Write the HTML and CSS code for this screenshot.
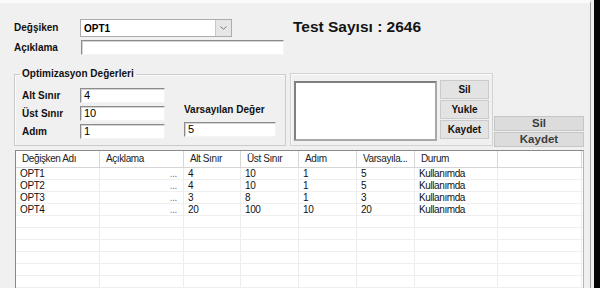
FILE: index.html
```html
<!DOCTYPE html>
<html lang="tr">
<head>
    <meta charset="UTF-8">
    <title>Optimizasyon</title>
    <link rel="stylesheet" href="styles.css">
</head>
<body>
<div class="window">
    <div class="top">
        <div class="fields">
            <div class="row">
                <span class="lbl">Değşiken</span>
                <div class="combo">
                    <span class="combo-text">OPT1</span>
                    <span class="drop">
                        <svg width="7" height="4" viewBox="0 0 7 4"><path d="M0.5 0.5 L3.5 3.2 L6.5 0.5" fill="none" stroke="#7a7a7a" stroke-width="1"/></svg>
                    </span>
                </div>
            </div>
            <div class="row">
                <span class="lbl">Açıklama</span>
                <div class="input desc"></div>
            </div>
        </div>
        <div class="title">Test Sayısı : 2646</div>
    </div>

    <div class="middle">
        <fieldset class="group">
            <legend>Optimizasyon Değerleri</legend>
            <div class="group-body">
                <div class="limits">
                    <div class="row"><span class="lbl short">Alt Sınır</span><div class="input num">4</div></div>
                    <div class="row"><span class="lbl short">Üst Sınır</span><div class="input num">10</div></div>
                    <div class="row"><span class="lbl short">Adım</span><div class="input num">1</div></div>
                </div>
                <div class="default">
                    <span class="lbl">Varsayılan Değer</span>
                    <div class="input def">5</div>
                </div>
            </div>
        </fieldset>

        <div class="panel">
            <div class="listbox"></div>
            <div class="btns">
                <button class="btn">Sil</button>
                <button class="btn">Yukle</button>
                <button class="btn">Kaydet</button>
            </div>
        </div>

        <div class="side-btns">
            <button class="flat">Sil</button>
            <button class="flat">Kaydet</button>
        </div>
    </div>

    <div class="grid">
        <div class="head">
            <div>Değişken Adı</div><div>Açıklama</div><div>Alt Sınır</div><div>Üst Sınır</div>
            <div>Adım</div><div>Varsayıla...</div><div>Durum</div><div></div>
        </div>
        <div class="line">
            <div>OPT1</div><div class="dots">...</div><div>4</div><div>10</div><div>1</div><div>5</div><div>Kullanımda</div><div></div>
        </div>
        <div class="line">
            <div>OPT2</div><div class="dots">...</div><div>4</div><div>10</div><div>1</div><div>5</div><div>Kullanımda</div><div></div>
        </div>
        <div class="line">
            <div>OPT3</div><div class="dots">...</div><div>3</div><div>8</div><div>1</div><div>3</div><div>Kullanımda</div><div></div>
        </div>
        <div class="line">
            <div>OPT4</div><div class="dots">...</div><div>20</div><div>100</div><div>10</div><div>20</div><div>Kullanımda</div><div></div>
        </div>
        <div class="line"><div></div><div></div><div></div><div></div><div></div><div></div><div></div><div></div></div>
        <div class="line"><div></div><div></div><div></div><div></div><div></div><div></div><div></div><div></div></div>
        <div class="line"><div></div><div></div><div></div><div></div><div></div><div></div><div></div><div></div></div>
        <div class="line"><div></div><div></div><div></div><div></div><div></div><div></div><div></div><div></div></div>
        <div class="line"><div></div><div></div><div></div><div></div><div></div><div></div><div></div><div></div></div>
        <div class="line"><div></div><div></div><div></div><div></div><div></div><div></div><div></div><div></div></div>
    </div>
</div>
</body>
</html>
```

FILE: styles.css
```css
body {
    margin: 0;
    width: 600px;
    height: 288px;
    overflow: hidden;
    background: #060606;
    font-family: "Liberation Sans", Arial, sans-serif;
    color: #000;
}
.window {
    width: 590px;
    height: 285px;
    background: #f0f0f0;
    border-top: 3px solid #fafafa;
    border-right: 1px solid #a3a3a3;
    box-shadow: 3px 0 0 #f0f0f0;
    overflow: hidden;
}
.top {
    display: flex;
    padding: 16px 0 0 14px;
}
.fields {
    display: flex;
    flex-direction: column;
    gap: 3px;
    width: 270px;
}
.row {
    display: flex;
    align-items: center;
}
.lbl {
    width: 66px;
    font-weight: bold;
    font-size: 10px;
    line-height: 12px;
    color: #111;
}
.lbl.short {
    width: 58px;
}
.combo {
    width: 152px;
    height: 18px;
    box-sizing: border-box;
    border: 1px solid #acacac;
    background: #fff;
    display: flex;
    align-items: center;
}
.combo-text {
    flex: 1;
    padding-left: 3px;
    font-weight: bold;
    font-size: 10px;
}
.drop {
    width: 15px;
    height: 16px;
    background: #e6e6e6;
    border-left: 1px solid #c8c8c8;
    display: flex;
    align-items: center;
    justify-content: center;
}
.input {
    box-sizing: border-box;
    height: 15px;
    background: #fff;
    border: 1px solid;
    border-color: #8c8c8c #f4f4f4 #f4f4f4 #8c8c8c;
    box-shadow: inset 1px 1px 0 #d4d4d4;
    font-size: 11px;
    line-height: 13px;
    padding-left: 3px;
}
.input.desc {
    width: 203px;
    margin-left: 1px;
}
.input.num {
    width: 85px;
}
.input.def {
    width: 92px;
}
.title {
    margin-left: 9px;
    margin-top: -2px;
    font-size: 15.5px;
    font-weight: bold;
    line-height: 20px;
    color: #141414;
}

.middle {
    display: flex;
    align-items: flex-start;
    padding: 13px 0 0 14px;
}
.group {
    box-sizing: border-box;
    width: 272px;
    margin: 0;
    padding: 8px 0 6px 7px;
    border: 1px solid #cbcbcb;
    box-shadow: inset 1px 1px 0 #fbfbfb;
}
.group legend {
    padding: 0 2px;
    margin-left: -2px;
    font-size: 10px;
    font-weight: bold;
    line-height: 12px;
    color: #111;
}
.group-body {
    display: flex;
    align-items: flex-end;
}
.limits {
    display: flex;
    flex-direction: column;
    gap: 3px;
}
.default {
    display: flex;
    flex-direction: column;
    margin: 0 0 2px 19px;
}
.default .lbl {
    width: auto;
    margin-bottom: 6px;
}

.panel {
    display: flex;
    margin: 5px 0 0 4px;
    width: 203px;
    height: 73px;
    box-sizing: border-box;
    padding: 7px 0 0 3px;
    border: 1px solid #d2d2d2;
    box-shadow: inset 1px 1px 0 #fbfbfb;
}
.listbox {
    width: 143px;
    height: 60px;
    box-sizing: border-box;
    background: #fff;
    border: 2px solid;
    border-color: #808080 #a8a8a8 #a8a8a8 #808080;
}
.btns {
    display: flex;
    flex-direction: column;
    gap: 1px;
    margin: -1px 0 0 3px;
}
.btn {
    width: 49px;
    height: 19px;
    padding: 0;
    background: #e3e3e3;
    border: 1px solid #cbcbcb;
    font-family: "Liberation Sans", Arial, sans-serif;
    font-size: 10px;
    font-weight: bold;
    color: #111;
}
.side-btns {
    display: flex;
    flex-direction: column;
    gap: 1px;
    margin: 48px 0 0 1px;
}
.flat {
    width: 90px;
    height: 15px;
    padding: 0;
    background: #dcdcdc;
    border: 1px solid #c6c6c6;
    font-family: "Liberation Sans", Arial, sans-serif;
    font-size: 11.5px;
    font-weight: bold;
    line-height: 13px;
    color: #3c3c3c;
}

.grid {
    margin: 3px 0 0 15px;
    width: 567px;
    height: 140px;
    background: #fff;
    border: 1px solid #8a8a8a;
    border-right-color: #b4b4b4;
    border-bottom: none;
    font-family: "Liberation Sans", Arial, sans-serif;
    font-size: 10px;
    letter-spacing: -0.4px;
    overflow: hidden;
}
.head, .line {
    display: grid;
    grid-template-columns: 84px 84px 57px 58px 58px 58px 83px 84px;
}
.head {
    height: 17px;
    border-bottom: 1px solid #d6d6d6;
    box-sizing: border-box;
}
.head div {
    border-right: 1px solid #d6d6d6;
    padding-left: 6px;
    line-height: 16px;
    color: #222;
}
.line {
    height: 12px;
    box-sizing: border-box;
    border-bottom: 1px solid #efefef;
}
.line div {
    border-right: 1px solid #ececec;
    padding-left: 4px;
    line-height: 12px;
    white-space: nowrap;
    color: #111;
}
.line div.dots {
    text-align: right;
    padding-right: 6px;
    color: #777;
}
```
